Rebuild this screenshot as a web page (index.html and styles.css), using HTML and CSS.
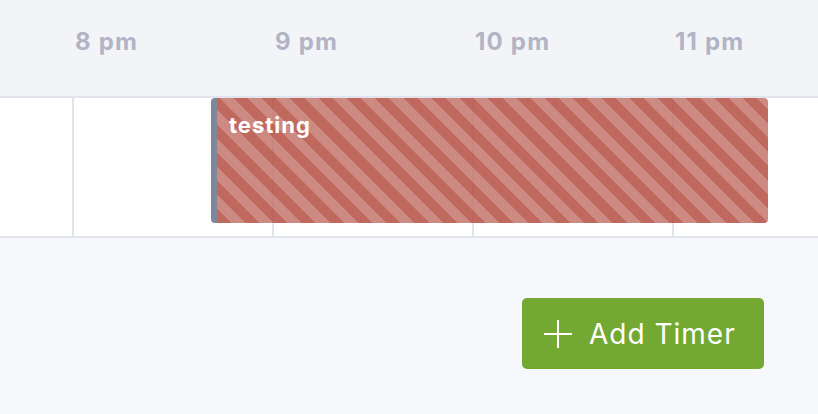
FILE: index.html
```html
<!DOCTYPE html>
<html>
<head>
<meta charset="utf-8">
<link rel="stylesheet" href="styles.css">
</head>
<body>
  <div class="header">
    <div class="hour">8 pm</div>
    <div class="hour">9 pm</div>
    <div class="hour">10 pm</div>
    <div class="hour">11 pm</div>
  </div>
  <div class="row">
    <div class="cell"></div>
    <div class="cell"></div>
    <div class="cell"></div>
    <div class="cell"></div>
    <div class="event"><span class="event-title">testing</span></div>
  </div>
  <div class="footer">
    <button class="add-btn">
      <svg class="plus" width="28" height="28" viewBox="0 0 28 28"><path d="M14 0V28M0 14H28" stroke="#fff" stroke-width="2" fill="none"/></svg>
      <span>Add Timer</span>
    </button>
  </div>
</body>
</html>
```
FILE: styles.css
```css
html, body {
  margin: 0;
  padding: 0;
}
body {
  background: #f7f8fc;
  font-family: Inter, "Liberation Sans", sans-serif;
  width: 818px;
  height: 414px;
  overflow: hidden;
}
.header {
  height: 96px;
  box-sizing: content-box;
  background: #f3f4f8;
  border-bottom: 2px solid #e1e3ed;
  display: flex;
  padding-left: 72px;
  overflow: hidden;
}
.hour {
  flex: 0 0 200px;
  padding-left: 3px;
  box-sizing: border-box;
  font-size: 24px;
  font-weight: 700;
  letter-spacing: 1.2px;
  color: #b2b4c6;
  line-height: 84px;
}
.row {
  position: relative;
  height: 138px;
  background: #fff;
  border-bottom: 2px solid #e1e3ed;
  display: flex;
  padding-left: 72px;
  overflow: hidden;
}
.cell {
  flex: 0 0 200px;
  box-sizing: border-box;
  border-left: 2px solid #e1e3ed;
}
.event {
  position: absolute;
  left: 211px;
  top: 0;
  width: 557px;
  height: 125px;
  box-sizing: border-box;
  border-left: 6px solid #80879b;
  border-radius: 4px;
  background: repeating-linear-gradient(45deg,
    rgba(181, 80, 67, 0.86) 0px,
    rgba(181, 80, 67, 0.86) 10px,
    rgba(196, 119, 110, 0.86) 10px,
    rgba(196, 119, 110, 0.86) 20px);
  padding: 14px 0 0 12px;
}
.event-title {
  display: block;
  color: #fff;
  font-size: 22px;
  font-weight: 700;
  letter-spacing: 1px;
  line-height: 27px;
}
.footer {
  display: flex;
  justify-content: flex-end;
  padding: 60px 54px 0 0;
}
.add-btn {
  width: 242px;
  height: 71px;
  border: none;
  border-radius: 5px;
  background: #73a833;
  color: #fff;
  font-family: Inter, "Liberation Sans", sans-serif;
  font-size: 28px;
  font-weight: 400;
  letter-spacing: 1px;
  display: flex;
  align-items: center;
  gap: 17px;
  padding: 0 0 0 22px;
  box-sizing: border-box;
}
.plus {
  display: block;
  flex: none;
}
```
